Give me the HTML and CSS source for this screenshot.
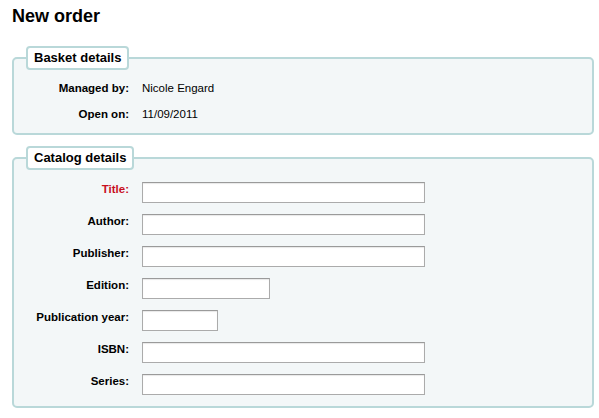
FILE: index.html
```html
<!DOCTYPE html>
<html lang="en">
<head>
<meta charset="utf-8">
<title>New order</title>
<link rel="stylesheet" href="styles.css">
</head>
<body>
<h1 class="page-title">New order</h1>

<fieldset class="box">
  <legend class="box-legend">Basket details</legend>
  <div class="rows rows-info">
    <span class="label">Managed by:</span><span class="value">Nicole Engard</span>
    <span class="label">Open on:</span><span class="value">11/09/2011</span>
  </div>
</fieldset>

<fieldset class="box box-catalog">
  <legend class="box-legend">Catalog details</legend>
  <div class="rows rows-form">
    <label class="label required" for="title">Title:</label><span class="field"><input id="title" class="input input-long" type="text"></span>
    <label class="label" for="author">Author:</label><span class="field"><input id="author" class="input input-long" type="text"></span>
    <label class="label" for="publisher">Publisher:</label><span class="field"><input id="publisher" class="input input-long" type="text"></span>
    <label class="label" for="edition">Edition:</label><span class="field"><input id="edition" class="input input-mid" type="text"></span>
    <label class="label" for="year">Publication year:</label><span class="field"><input id="year" class="input input-short" type="text"></span>
    <label class="label" for="isbn">ISBN:</label><span class="field"><input id="isbn" class="input input-long" type="text"></span>
    <label class="label" for="series">Series:</label><span class="field"><input id="series" class="input input-long" type="text"></span>
  </div>
</fieldset>
</body>
</html>
```

FILE: styles.css
```css
html, body {
  margin: 0;
  padding: 0;
  background: #ffffff;
}

body {
  font-family: "Liberation Sans", Arial, Helvetica, sans-serif;
  font-size: 11.5px;
  color: #000000;
}

.page-title {
  margin: 6px 0 19px 12px;
  font-size: 18px;
  line-height: 21px;
  font-weight: bold;
}

.box {
  margin: 0 5px 11px 12px;
  padding: 5px 12px 6px 12px;
  border: 2px solid #b9d8d9;
  border-radius: 5px;
  background: #f3f7f8;
  min-width: 0;
}

.box-catalog {
  padding-top: 6px;
}

.box-legend {
  padding: 2px 6px;
  border: 2px solid #b9d8d9;
  border-radius: 4px;
  background: #ffffff;
  font-size: 13px;
  line-height: 16px;
  font-weight: bold;
}

.rows {
  display: grid;
  grid-template-columns: 103px 1fr;
  column-gap: 13px;
  align-items: center;
}

.rows-info {
  grid-auto-rows: 26px;
}

.rows-form {
  grid-auto-rows: 32px;
}

.label {
  text-align: right;
  font-weight: bold;
  line-height: 15px;
}

.rows-form .label {
  margin-bottom: 6px;
}

.value {
  line-height: 15px;
}

.required {
  color: #c8101e;
}

.field {
  display: flex;
  align-items: center;
}

.input {
  box-sizing: border-box;
  height: 21px;
  margin: 0;
  padding: 1px 3px;
  border: 1px solid #ababab;
  border-top-color: #9a9a9a;
  background: #ffffff;
  box-shadow: inset 0 1px 1px #e8e8e8;
  font-family: inherit;
  font-size: 12px;
}

.input-long {
  width: 283px;
}

.input-mid {
  width: 128px;
}

.input-short {
  width: 76px;
}
```
